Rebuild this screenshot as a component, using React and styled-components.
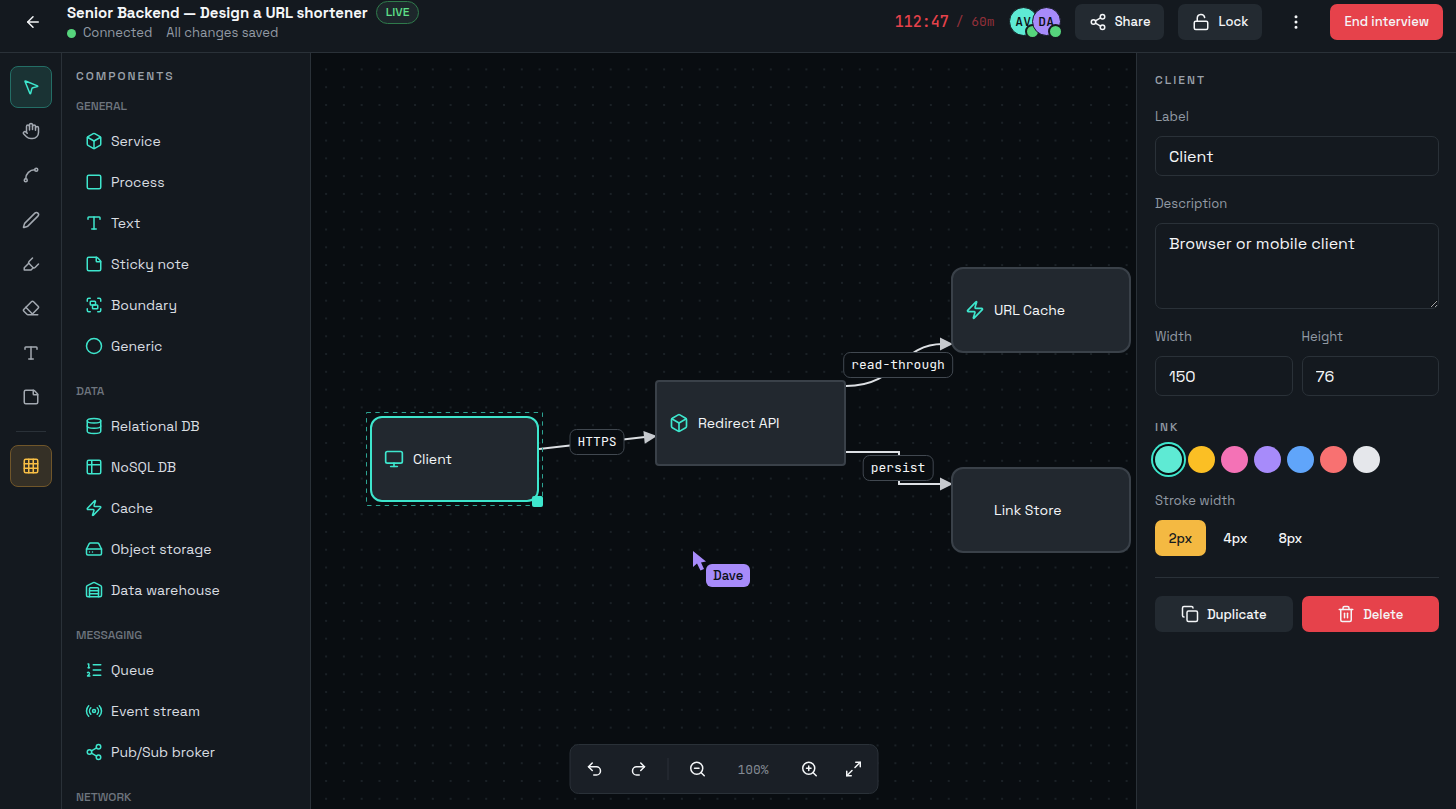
import { useState } from "react";
import styled, { createGlobalStyle, css } from "styled-components";
import {
  ArrowLeft,
  Box,
  Circle,
  Copy,
  Database,
  EllipsisVertical,
  Eraser,
  Grid3x3,
  Group,
  Hand,
  HardDrive,
  Highlighter,
  ListOrdered,
  LockOpen,
  Maximize2,
  Monitor,
  MousePointer2,
  Pen,
  Radio,
  Redo2,
  Share2,
  Spline,
  Square,
  StickyNote,
  Table2,
  Trash2,
  Type,
  Undo2,
  Warehouse,
  Zap,
  ZoomIn,
  ZoomOut,
} from "lucide-react";

const toolGroups = [
  [
    { name: "Select", icon: MousePointer2 },
    { name: "Pan", icon: Hand },
    { name: "Connect", icon: Spline },
  ],
  [
    { name: "Pen", icon: Pen },
    { name: "Highlighter", icon: Highlighter },
    { name: "Eraser", icon: Eraser },
  ],
  [
    { name: "Text", icon: Type },
    { name: "Note", icon: StickyNote },
  ],
];

const library = [
  {
    title: "GENERAL",
    items: [
      { name: "Service", icon: Box },
      { name: "Process", icon: Square },
      { name: "Text", icon: Type },
      { name: "Sticky note", icon: StickyNote },
      { name: "Boundary", icon: Group },
      { name: "Generic", icon: Circle },
    ],
  },
  {
    title: "DATA",
    items: [
      { name: "Relational DB", icon: Database },
      { name: "NoSQL DB", icon: Table2 },
      { name: "Cache", icon: Zap },
      { name: "Object storage", icon: HardDrive },
      { name: "Data warehouse", icon: Warehouse },
    ],
  },
  {
    title: "MESSAGING",
    items: [
      { name: "Queue", icon: ListOrdered },
      { name: "Event stream", icon: Radio },
      { name: "Pub/Sub broker", icon: Share2 },
    ],
  },
  { title: "NETWORK", items: [] },
];

const nodes = [
  { id: "client", label: "Client", icon: Monitor, x: 59, y: 363, w: 169, h: 86, r: 12 },
  { id: "api", label: "Redirect API", icon: Box, x: 344, y: 327, w: 191, h: 86, r: 4 },
  { id: "cache", label: "URL Cache", icon: Zap, x: 640, y: 214, w: 180, h: 86, r: 12 },
  { id: "store", label: "Link Store", x: 640, y: 414, w: 180, h: 86, r: 12 },
];

const edges = [
  { label: "HTTPS", x: 286, y: 389, d: "M228 396 L334 384", tip: "translate(346 383) rotate(-6)" },
  { label: "read-through", x: 587, y: 312, d: "M535 333 C588 333 588 291 632 291", tip: "translate(642 291)" },
  { label: "persist", x: 587, y: 415, d: "M535 399 H588 V431 H632", tip: "translate(642 431)" },
];

const inks = [
  { name: "Teal", color: "#5eead4" },
  { name: "Amber", color: "#fbbf24" },
  { name: "Pink", color: "#f472b6" },
  { name: "Violet", color: "#a78bfa" },
  { name: "Blue", color: "#60a5fa" },
  { name: "Red", color: "#f87171" },
  { name: "White", color: "#e5e7eb" },
];

export default function App() {
  const [tool, setTool] = useState("Select");
  const [grid, setGrid] = useState(true);
  const [selected, setSelected] = useState("client");
  const [ink, setInk] = useState("Teal");
  const [stroke, setStroke] = useState("2px");

  return (
    <Page>
      <GlobalStyle />
      <Header>
        <IconButton aria-label="Back">
          <ArrowLeft size={18} />
        </IconButton>
        <TitleBlock>
          <TitleRow>
            <Title>Senior Backend — Design a URL shortener</Title>
            <LiveBadge>LIVE</LiveBadge>
          </TitleRow>
          <StatusRow>
            <StatusDot />
            <span>Connected</span>
            <SavedText>All changes saved</SavedText>
          </StatusRow>
        </TitleBlock>
        <Actions>
          <Timer>
            <strong>112:47</strong>
            <span>/ 60m</span>
          </Timer>
          <Avatars>
            <Avatar $color="#5eead4">AV</Avatar>
            <Avatar $color="#a78bfa">DA</Avatar>
          </Avatars>
          <Button>
            <Share2 size={18} />
            Share
          </Button>
          <Button>
            <LockOpen size={18} />
            Lock
          </Button>
          <IconButton aria-label="More">
            <EllipsisVertical size={18} />
          </IconButton>
          <Button $danger>End interview</Button>
        </Actions>
      </Header>

      <Workspace>
        <Rail aria-label="Tools">
          {toolGroups.map((group, i) => (
            <ToolGroup key={i}>
              {group.map(({ name, icon: Icon }) => (
                <ToolButton
                  key={name}
                  aria-label={name}
                  $tone={tool === name ? "teal" : undefined}
                  onClick={() => setTool(name)}
                >
                  <Icon size={18} />
                </ToolButton>
              ))}
            </ToolGroup>
          ))}
          <RailDivider />
          <ToolButton aria-label="Toggle grid" $tone={grid ? "amber" : undefined} onClick={() => setGrid(!grid)}>
            <Grid3x3 size={18} />
          </ToolButton>
        </Rail>

        <Library>
          <PanelTitle>COMPONENTS</PanelTitle>
          {library.map((group) => (
            <section key={group.title}>
              <GroupTitle>{group.title}</GroupTitle>
              <ItemList>
                {group.items.map(({ name, icon: Icon }) => (
                  <li key={name}>
                    <ItemButton>
                      <Icon size={18} />
                      {name}
                    </ItemButton>
                  </li>
                ))}
              </ItemList>
            </section>
          ))}
        </Library>

        <Canvas>
          <Drawing aria-hidden="true">
            <defs>
              <pattern id="dots" x="6.2" y="7.5" width="17.79" height="17.79" patternUnits="userSpaceOnUse">
                <circle cx="8.9" cy="8.9" r="0.9" fill="#22292f" />
              </pattern>
            </defs>
            {grid && <rect width="100%" height="100%" fill="url(#dots)" />}
            {edges.map((edge) => (
              <g key={edge.label}>
                <path d={edge.d} fill="none" stroke="#dde0e4" strokeWidth="2" />
                <path d="M0 0 L-13 -6.5 V6.5 Z" transform={edge.tip} fill="#c6c9ce" />
              </g>
            ))}
            {nodes
              .filter(({ id }) => id === selected)
              .map(({ id, x, y, w, h }) => (
                <rect
                  key={id}
                  x={x - 3.5}
                  y={y - 3.5}
                  width={w + 7}
                  height={h + 7}
                  fill="none"
                  stroke="#2da392"
                  strokeDasharray="4.4 4.4"
                />
              ))}
          </Drawing>
          {nodes.map(({ id, label, icon: Icon, ...place }) => (
            <Node key={id} {...toProps(place)} $selected={selected === id} onClick={() => setSelected(id)}>
              <NodeIcon>{Icon && <Icon size={20} />}</NodeIcon>
              {label}
              {selected === id && <Handle />}
            </Node>
          ))}
          {edges.map((edge) => (
            <EdgeLabel key={edge.label} $x={edge.x} $y={edge.y}>
              {edge.label}
            </EdgeLabel>
          ))}
          <RemoteCursor>
            <svg width="14" height="20" viewBox="0 0 14 20" aria-hidden="true">
              <path d="M0 0 L0 16 L4 12.5 L7.5 19.5 L11 18 L8 11.5 L13 10.5 Z" fill="#a78bfa" />
            </svg>
            <span>Dave</span>
          </RemoteCursor>
          <ZoomBar>
            <IconButton aria-label="Undo">
              <Undo2 size={18} />
            </IconButton>
            <IconButton aria-label="Redo">
              <Redo2 size={18} />
            </IconButton>
            <BarDivider />
            <IconButton aria-label="Zoom out">
              <ZoomOut size={18} />
            </IconButton>
            <ZoomValue>100%</ZoomValue>
            <IconButton aria-label="Zoom in">
              <ZoomIn size={18} />
            </IconButton>
            <IconButton aria-label="Fit to screen">
              <Maximize2 size={18} />
            </IconButton>
          </ZoomBar>
        </Canvas>

        <Inspector>
          <PanelTitle>CLIENT</PanelTitle>
          <Field>
            <FieldLabel htmlFor="node-label">Label</FieldLabel>
            <Input id="node-label" defaultValue="Client" />
          </Field>
          <Field>
            <FieldLabel htmlFor="node-description">Description</FieldLabel>
            <TextArea id="node-description" defaultValue="Browser or mobile client" />
          </Field>
          <Columns>
            <Field>
              <FieldLabel htmlFor="node-width">Width</FieldLabel>
              <Input id="node-width" inputMode="numeric" defaultValue="150" />
            </Field>
            <Field>
              <FieldLabel htmlFor="node-height">Height</FieldLabel>
              <Input id="node-height" inputMode="numeric" defaultValue="76" />
            </Field>
          </Columns>
          <InkSection>
            <InkTitle>INK</InkTitle>
            <Swatches>
              {inks.map(({ name, color }) => (
                <Swatch
                  key={name}
                  aria-label={name}
                  $color={color}
                  $active={ink === name}
                  onClick={() => setInk(name)}
                />
              ))}
            </Swatches>
          </InkSection>
          <Field>
            <FieldLabel as="span">Stroke width</FieldLabel>
            <StrokeRow>
              {["2px", "4px", "8px"].map((size) => (
                <StrokeButton key={size} $active={stroke === size} onClick={() => setStroke(size)}>
                  {size}
                </StrokeButton>
              ))}
            </StrokeRow>
          </Field>
          <Footer>
            <Button>
              <Copy size={18} />
              Duplicate
            </Button>
            <Button $danger>
              <Trash2 size={18} />
              Delete
            </Button>
          </Footer>
        </Inspector>
      </Workspace>
    </Page>
  );
}

function toProps({ x, y, w, h, r }) {
  return { $x: x, $y: y, $w: w, $h: h, $r: r };
}

const GlobalStyle = createGlobalStyle`
  :root {
    --bg: #090d11;
    --panel: #14191f;
    --raised: #232a31;
    --line: #2a3138;
    --text: #f4f6f8;
    --muted: #929aa4;
    --teal: #3ee6cd;
    --amber: #f4b942;
    --red: #e6424b;
    --green: #56d47c;
    --sans: "Space Grotesk", Inter, sans-serif;
    --mono: "JetBrains Mono", "DejaVu Sans Mono", monospace;
    color-scheme: dark;
  }

  * {
    box-sizing: border-box;
  }

  body {
    margin: 0;
    background: var(--bg);
    color: var(--text);
    font-family: var(--sans);
  }

  button, input, textarea {
    font-family: inherit;
    color: inherit;
  }

  button {
    cursor: pointer;
  }
`;

const Page = styled.div`
  display: flex;
  flex-direction: column;
  height: 100vh;
  overflow: hidden;
`;

const Header = styled.header`
  display: flex;
  align-items: center;
  padding: 1px 13px 10px;
  background: var(--panel);
  border-bottom: 1px solid var(--line);
`;

const IconButton = styled.button`
  display: flex;
  align-items: center;
  justify-content: center;
  width: 40px;
  height: 40px;
  padding: 0;
  border: 0;
  border-radius: 7px;
  background: none;

  &:hover {
    background: var(--raised);
  }
`;

const TitleBlock = styled.div`
  margin-left: 14px;
`;

const TitleRow = styled.div`
  display: flex;
  align-items: center;
  gap: 8px;
`;

const Title = styled.h1`
  margin: 0;
  font-size: 15px;
  line-height: 23px;
  font-weight: 600;
  white-space: nowrap;
`;

const LiveBadge = styled.span`
  padding: 0 9px;
  border: 1px solid #2f7a4b;
  border-radius: 12px;
  background: #1d272b;
  color: #5fe08a;
  font-size: 12px;
  line-height: 21px;
  font-weight: 500;
`;

const StatusRow = styled.div`
  display: flex;
  align-items: center;
  color: var(--muted);
  font-size: 13px;
  line-height: 18px;
  white-space: nowrap;
`;

const StatusDot = styled.i`
  width: 9px;
  height: 9px;
  margin-right: 7px;
  border-radius: 50%;
  background: var(--green);
`;

const SavedText = styled.span`
  margin-left: 14px;
`;

const Actions = styled.div`
  display: flex;
  align-items: center;
  gap: 14px;
  margin-left: auto;
`;

const Timer = styled.div`
  display: flex;
  align-items: center;
  gap: 7px;
  color: var(--red);
  font-family: var(--mono);
  font-size: 13px;
  white-space: nowrap;

  strong {
    font-size: 15px;
    font-weight: 500;
  }

  span {
    color: #92303a;
  }
`;

const Avatars = styled.div`
  display: flex;
`;

const Avatar = styled.span`
  position: relative;
  display: flex;
  align-items: center;
  justify-content: center;
  width: 29px;
  height: 29px;
  border: 1px solid var(--panel);
  border-radius: 50%;
  background: ${({ $color }) => $color};
  color: #0b1014;
  font-family: var(--mono);
  font-size: 13px;
  font-weight: 500;

  & + & {
    margin-left: -6px;
  }

  &::after {
    content: "";
    position: absolute;
    right: -3px;
    bottom: -4px;
    width: 11px;
    height: 11px;
    border: 2px solid var(--panel);
    border-radius: 50%;
    background: var(--green);
  }
`;

const Button = styled.button`
  display: flex;
  align-items: center;
  justify-content: center;
  gap: 8px;
  height: 36px;
  padding: 0 14px;
  border: 0;
  border-radius: 7px;
  background: ${({ $danger }) => ($danger ? "var(--red)" : "var(--raised)")};
  font-size: 13px;
  font-weight: 500;
  white-space: nowrap;
`;

const Workspace = styled.div`
  display: flex;
  flex: 1;
  min-height: 0;
`;

const Rail = styled.nav`
  display: flex;
  flex-direction: column;
  align-items: center;
  gap: 3px;
  flex: 0 0 62px;
  padding-top: 13px;
  background: var(--panel);
  border-right: 1px solid var(--line);
`;

const ToolGroup = styled.div`
  display: flex;
  flex-direction: column;
  gap: 2px;
`;

const tones = {
  teal: css`
    border-color: #246e66;
    background: #1a3334;
    color: var(--teal);
  `,
  amber: css`
    border-color: #70562a;
    background: #353026;
    color: #f9bf45;
  `,
};

const ToolButton = styled.button`
  display: flex;
  align-items: center;
  justify-content: center;
  width: 42px;
  height: 42px;
  padding: 0;
  border: 1px solid transparent;
  border-radius: 8px;
  background: none;
  color: #a3a9b1;
  ${({ $tone }) => tones[$tone]}
`;

const RailDivider = styled.hr`
  width: 30px;
  margin: 10px 0;
  border: 0;
  border-top: 1px solid var(--line);
`;

const Library = styled.aside`
  flex: 0 0 249px;
  padding: 14px 14px 0;
  overflow: hidden;
  background: var(--panel);
  border-right: 1px solid var(--line);

  section {
    padding-bottom: 17px;
  }
`;

const PanelTitle = styled.h2`
  margin: 0;
  color: #9ba2ab;
  font-size: 12px;
  line-height: 18px;
  font-weight: 500;
  letter-spacing: 2px;

  & + section {
    margin-top: 13px;
  }
`;

const GroupTitle = styled.h3`
  margin: 0 0 6px;
  color: #6e757e;
  font-size: 12px;
  line-height: 16px;
  font-weight: 500;
`;

const ItemList = styled.ul`
  margin: 0;
  padding: 0;
  list-style: none;
`;

const ItemButton = styled.button`
  display: flex;
  align-items: center;
  gap: 8px;
  width: 100%;
  height: 41px;
  padding: 0 9px;
  border: 0;
  border-radius: 7px;
  background: none;
  color: #d9dde1;
  font-size: 14px;
  text-align: left;

  svg {
    color: var(--teal);
  }

  &:hover {
    background: var(--raised);
  }
`;

const Canvas = styled.main`
  position: relative;
  flex: 1;
  min-width: 0;
  overflow: hidden;
`;

const Drawing = styled.svg`
  position: absolute;
  inset: 0;
  width: 100%;
  height: 100%;
`;

const Node = styled.div`
  position: absolute;
  left: ${({ $x }) => $x}px;
  top: ${({ $y }) => $y}px;
  display: flex;
  align-items: center;
  gap: 9px;
  width: ${({ $w }) => $w}px;
  height: ${({ $h }) => $h}px;
  padding: 0 12px;
  border: 2px solid ${({ $selected }) => ($selected ? "var(--teal)" : "#3a4149")};
  border-radius: ${({ $r }) => $r}px;
  background: #22282f;
  font-size: 14px;
`;

const NodeIcon = styled.span`
  display: flex;
  width: 20px;
  height: 20px;
  color: var(--teal);
`;

const Handle = styled.i`
  position: absolute;
  right: -6px;
  bottom: -7px;
  width: 11px;
  height: 11px;
  border-radius: 2px;
  background: var(--teal);
`;

const EdgeLabel = styled.span`
  position: absolute;
  left: ${({ $x }) => $x}px;
  top: ${({ $y }) => $y}px;
  padding: 0 7px;
  border: 1px solid #414850;
  border-radius: 7px;
  background: var(--bg);
  font-family: var(--mono);
  font-size: 13px;
  line-height: 24px;
  transform: translate(-50%, -50%);
`;

const RemoteCursor = styled.div`
  position: absolute;
  left: 382px;
  top: 498px;
  display: flex;

  span {
    margin: 13px 0 0 -1px;
    padding: 0 7px;
    border-radius: 6px;
    background: #a78bfa;
    color: #0b1014;
    font-size: 13px;
    line-height: 23px;
    font-weight: 500;
  }
`;

const ZoomBar = styled.div`
  position: absolute;
  left: 50%;
  bottom: 15px;
  display: flex;
  align-items: center;
  gap: 4px;
  padding: 4px;
  border: 1px solid var(--line);
  border-radius: 9px;
  background: #1a1f26;
  transform: translateX(-50%);
`;

const BarDivider = styled.i`
  width: 1px;
  height: 22px;
  margin: 0 5px;
  background: var(--line);
`;

const ZoomValue = styled.span`
  width: 64px;
  color: #838a93;
  font-family: var(--mono);
  font-size: 13px;
  text-align: center;
`;

const Inspector = styled.aside`
  display: flex;
  flex-direction: column;
  gap: 19px;
  flex: 0 0 320px;
  padding: 18px 17px 18px 18px;
  background: var(--panel);
  border-left: 1px solid var(--line);
`;

const Field = styled.div`
  display: flex;
  flex-direction: column;
  gap: 10px;
  min-width: 0;
`;

const FieldLabel = styled.label`
  color: var(--muted);
  font-size: 13px;
  line-height: 18px;
`;

const controlStyle = css`
  width: 100%;
  border: 1px solid var(--line);
  border-radius: 7px;
  background: transparent;
  font-size: 16px;
  outline: none;

  &:focus {
    border-color: var(--teal);
  }
`;

const Input = styled.input`
  ${controlStyle}
  height: 40px;
  padding: 0 13px;
`;

const TextArea = styled.textarea`
  ${controlStyle}
  display: block;
  height: 86px;
  padding: 9px 13px;
  line-height: 22px;
  resize: vertical;
`;

const Columns = styled.div`
  display: grid;
  grid-template-columns: 1fr 1fr;
  gap: 9px;
`;

const InkSection = styled(Field)`
  padding-top: 3px;
`;

const InkTitle = styled(PanelTitle)`
  color: var(--muted);
`;

const Swatches = styled.div`
  display: flex;
  gap: 6px;
`;

const Swatch = styled.button`
  width: 27px;
  height: 27px;
  padding: 0;
  border: 0;
  border-radius: 50%;
  background: ${({ $color }) => $color};
  box-shadow: ${({ $active }) => ($active ? "0 0 0 2px var(--bg), 0 0 0 4px var(--teal)" : "none")};
`;

const StrokeRow = styled.div`
  display: flex;
  gap: 4px;
`;

const StrokeButton = styled.button`
  width: 51px;
  height: 36px;
  padding: 0;
  border: 0;
  border-radius: 7px;
  background: ${({ $active }) => ($active ? "var(--amber)" : "none")};
  color: ${({ $active }) => ($active ? "#14191f" : "var(--text)")};
  font-size: 13px;
  font-weight: 500;
`;

const Footer = styled(Columns)`
  margin-top: 2px;
  padding-top: 18px;
  border-top: 1px solid var(--line);
`;
